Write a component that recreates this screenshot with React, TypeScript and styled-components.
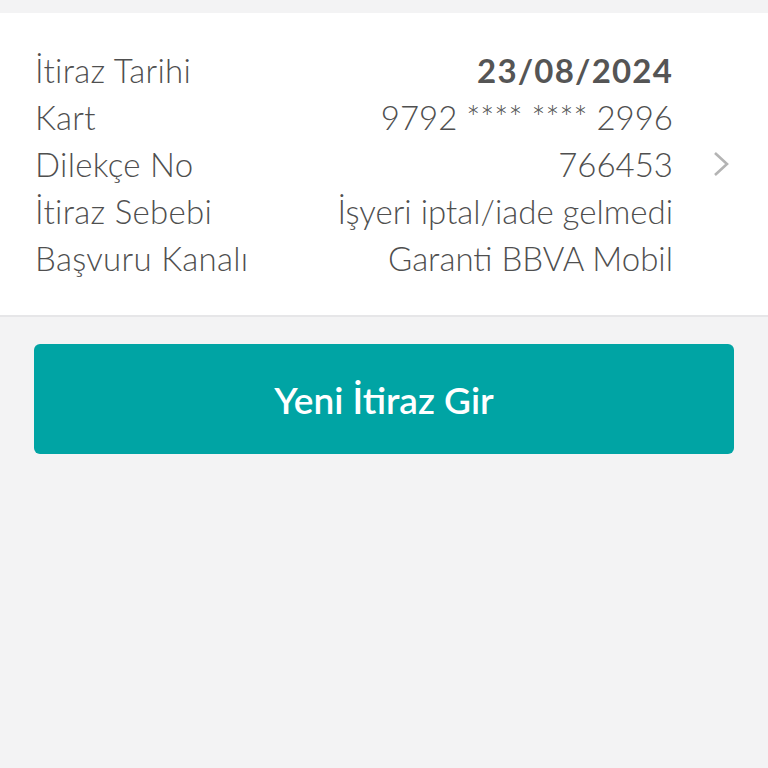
import React from "react";
import styled, { createGlobalStyle } from "styled-components";

const GlobalStyle = createGlobalStyle`
  html, body {
    margin: 0;
    padding: 0;
    background-color: #f3f3f4;
    font-family: Lato, "Open Sans", sans-serif;
  }
`;

const Page = styled.div`
  min-height: 768px;
  padding-top: 13px;
  box-sizing: border-box;
`;

const Card = styled.div`
  display: flex;
  align-items: center;
  background-color: #ffffff;
  border-bottom: 2px solid #e6e6e8;
  padding: 33px 38px 34px 35px;
`;

const Rows = styled.div`
  flex: 1;
  display: flex;
  flex-direction: column;
`;

const Row = styled.div`
  display: flex;
  justify-content: space-between;
  align-items: center;
  height: 47px;
  font-size: 33px;
  font-weight: 300;
  color: #4f4f4f;
`;

const Label = styled.span`
  white-space: nowrap;
  letter-spacing: 0.3px;
`;

const Value = styled.span<{ $bold?: boolean }>`
  white-space: nowrap;
  text-align: right;
  font-weight: ${(p) => (p.$bold ? 700 : 300)};
  letter-spacing: ${(p) => (p.$bold ? "1.2px" : "0")};
  color: ${(p) => (p.$bold ? "#555555" : "#4f4f4f")};
`;

const Chevron = styled.div`
  width: 57px;
  display: flex;
  justify-content: flex-end;
  color: #b4b4b4;
`;

const Actions = styled.div`
  padding: 27px 34px;
`;

const Button = styled.button`
  width: 100%;
  height: 110px;
  border: none;
  border-radius: 6px;
  background-color: #00a4a4;
  color: #ffffff;
  font-family: Lato, "Open Sans", sans-serif;
  font-size: 37px;
  font-weight: 600;
  cursor: pointer;
`;

const rows = [
  { label: "İtiraz Tarihi", value: "23/08/2024", bold: true },
  { label: "Kart", value: "9792 **** **** 2996" },
  { label: "Dilekçe No", value: "766453" },
  { label: "İtiraz Sebebi", value: "İşyeri iptal/iade gelmedi" },
  { label: "Başvuru Kanalı", value: "Garanti BBVA Mobil" },
];

function App() {
  return (
    <Page>
      <GlobalStyle />
      <Card>
        <Rows>
          {rows.map((r) => (
            <Row key={r.label}>
              <Label>{r.label}</Label>
              <Value $bold={r.bold}>{r.value}</Value>
            </Row>
          ))}
        </Rows>
        <Chevron>
          <svg width="18" height="28" viewBox="0 0 18 28" fill="none">
            <path d="M3 3 L15 14 L3 25" stroke="currentColor" strokeWidth="2.6" />
          </svg>
        </Chevron>
      </Card>
      <Actions>
        <Button>Yeni İtiraz Gir</Button>
      </Actions>
    </Page>
  );
}

export default App;
